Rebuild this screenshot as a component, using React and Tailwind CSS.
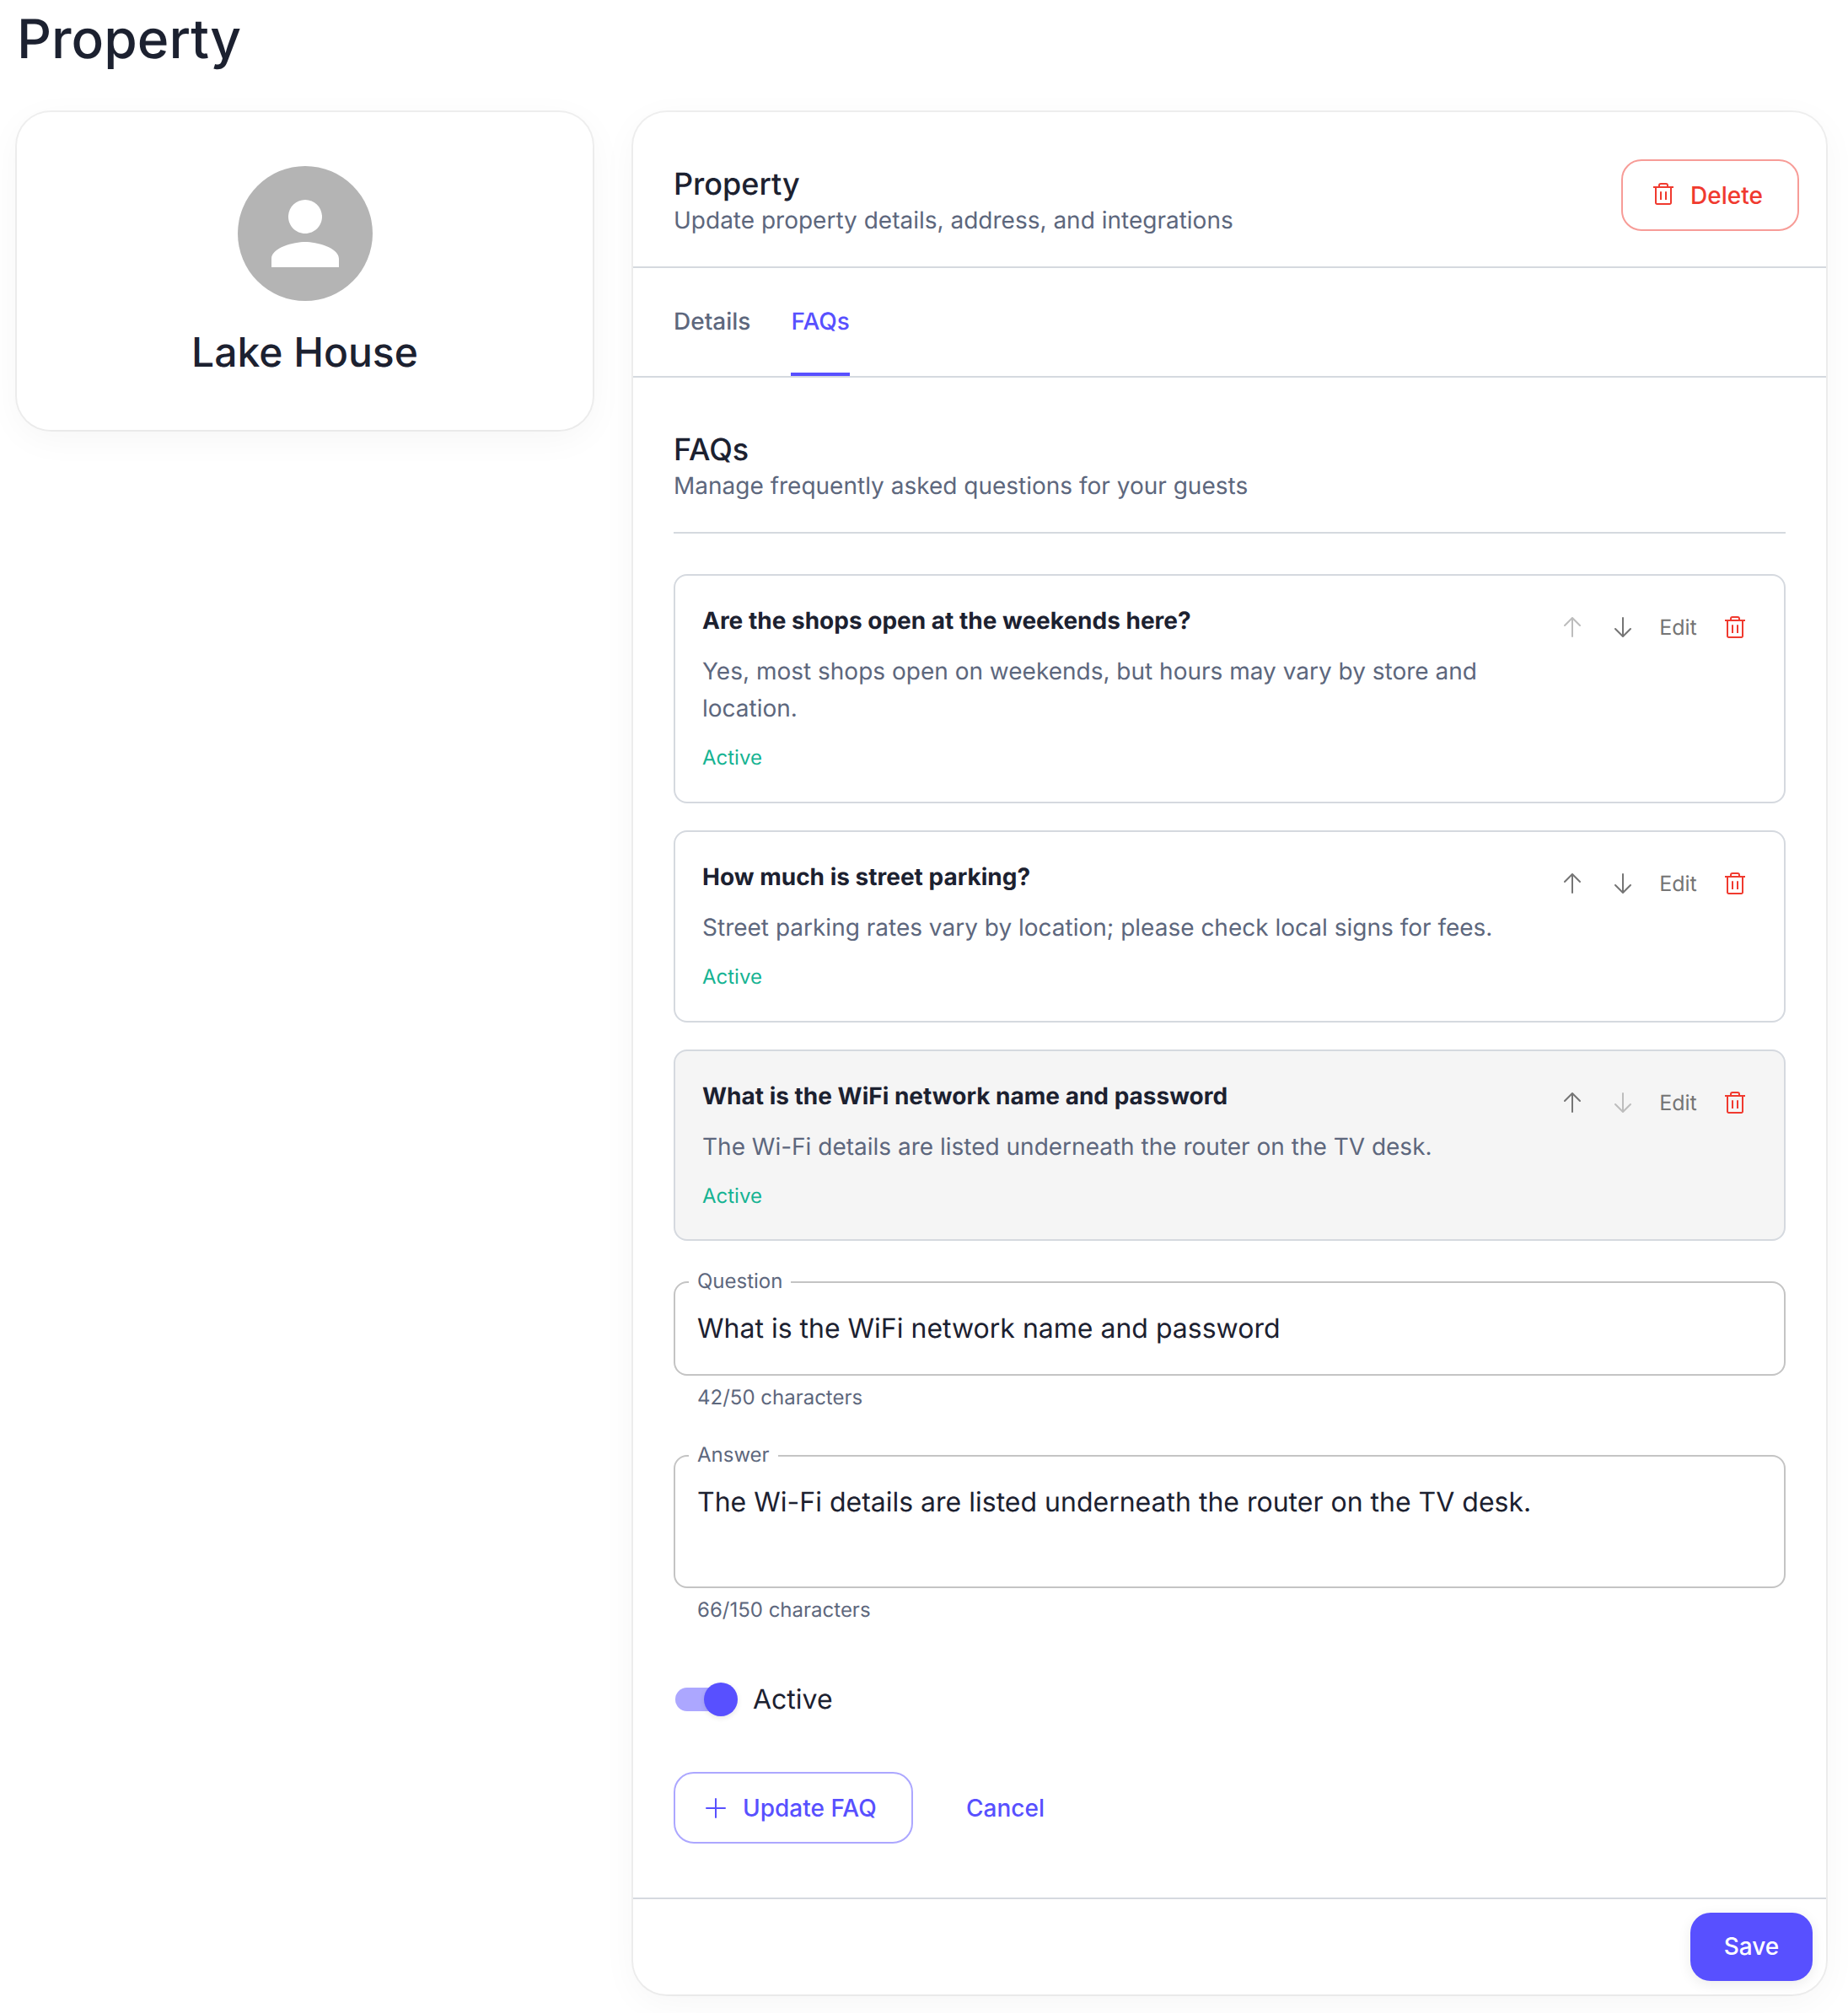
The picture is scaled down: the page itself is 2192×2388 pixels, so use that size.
const faqs = [
    {
        id: 1,
        question: "Are the shops open at the weekends here?",
        answer: "Yes, most shops open on weekends, but hours may vary by store and location.",
    },
    {
        id: 2,
        question: "How much is street parking?",
        answer: "Street parking rates vary by location; please check local signs for fees.",
    },
    {
        id: 3,
        question: "What is the WiFi network name and password",
        answer: "The Wi-Fi details are listed underneath the router on the TV desk.",
    },
];

function TrashIcon({ className }) {
    return (
        <svg className={className} viewBox="0 0 24 26" fill="none" stroke="currentColor" strokeWidth="2">
            <path d="M0 5h24M7 5V3a2 2 0 0 1 2-2h6a2 2 0 0 1 2 2v2M3 5v18.500a1.500 1.500 0 0 0 1.500 1.500h15a1.500 1.500 0 0 0 1.500-1.500V5M9 10.300v9.700M15 10.300v9.700" />
        </svg>
    );
}

function ArrowIcon({ className }) {
    return (
        <svg className={className} viewBox="0 0 20 24" fill="none" stroke="currentColor" strokeWidth="2" strokeLinecap="round" strokeLinejoin="round">
            <path d="M10 23V1.200M1 10l9-9 9 9" />
        </svg>
    );
}

function FaqItem({ faq, isFirst, isLast, selected }) {
    return (
        <div className={`flex justify-between items-start rounded-2xl border-2 border-[#d5d9df] pl-8 pr-[46px] pt-[31px] ${selected ? "bg-[#f5f5f5] pb-[29px]" : "pb-[30px]"}`}>
            <div className="w-[960px]">
                <h3 className="text-[28px] leading-[44px] font-bold text-[#1c2130]">{faq.question}</h3>
                <p className="mt-4 text-[28px] leading-[44px] text-[#5d677d]">{faq.answer}</p>
                <p className="mt-[15px] text-2xl leading-[44px] text-[#15b392]">Active</p>
            </div>
            <div className="flex items-center h-10 mt-[10px]">
                <ArrowIcon className={`w-5 h-6 ${isFirst ? "text-[#bdbdbd]" : "text-[#757575]"}`} />
                <ArrowIcon className={`w-5 h-6 ml-10 rotate-180 ${isLast ? "text-[#bdbdbd]" : "text-[#757575]"}`} />
                <span className="w-[111px] pt-[3px] text-center text-[25px] text-[#757575]">Edit</span>
                <TrashIcon className="w-6 h-[26px] text-[#f03a2f]" />
            </div>
        </div>
    );
}

function Field({ label, value, helper, className }) {
    return (
        <div>
            <fieldset className={`rounded-2xl border-2 border-[#c4c4c4] pl-4 pt-5 ${className}`}>
                <legend className="px-[10px] pb-[2px] text-2xl leading-[22px] text-[#5d677d]">{label}</legend>
                <p className="pl-[10px] text-[32px] leading-[46px] text-[#1c2130]">{value}</p>
            </fieldset>
            <p className="pl-7 mt-[6px] text-2xl leading-10 text-[#5d677d]">{helper}</p>
        </div>
    );
}

export default function App() {
    return (
        <div className="w-[2192px] h-[2388px] overflow-hidden bg-white pl-5 font-['Inter',sans-serif] text-[#1c2130] [text-rendering:geometricPrecision]">
            <h1 className="h-[133px] pt-2 text-[64px] leading-[77px] font-medium">Property</h1>

            <div className="flex items-start gap-12">
                <div className="w-[683px] h-[377px] pt-16 flex flex-col items-center rounded-[40px] shadow-[0_10px_44px_rgba(0,0,0,0.04),0_0_0_2px_rgba(0,0,0,0.06)]">
                    <div className="w-40 h-40 rounded-full bg-[#b4b4b4] flex items-center justify-center">
                        <svg className="w-[120px] h-[120px] text-white" viewBox="0 0 24 24" fill="currentColor">
                            <path d="M12 12c2.210 0 4-1.790 4-4s-1.790-4-4-4-4 1.790-4 4 1.790 4 4 4m0 2c-2.670 0-8 1.340-8 4v2h16v-2c0-2.660-5.330-4-8-4" />
                        </svg>
                    </div>
                    <h2 className="mt-8 text-[48px] leading-[58px] font-medium">Lake House</h2>
                </div>

                <div className="w-[1415px] h-[2233px] flex flex-col rounded-[40px] shadow-[0_10px_44px_rgba(0,0,0,0.04),0_0_0_2px_rgba(0,0,0,0.06)]">
                    <div className="h-[185px] flex justify-between items-start border-b-2 border-[#d5d9df] pl-12 pr-8 pt-14">
                        <div className="pt-2">
                            <h2 className="text-[36px] leading-[43px] font-medium">Property</h2>
                            <p className="-mt-px text-[28px] leading-[44px] text-[#5d677d]">Update property details, address, and integrations</p>
                        </div>
                        <button className="w-[211px] h-[85px] flex items-center pl-9 rounded-[24px] border-2 border-[#f79c97] text-[28px] font-medium text-[#f03a2f]">
                            <TrashIcon className="w-6 h-[26px] mr-5 -mt-[3px]" />
                            Delete
                        </button>
                    </div>

                    <div className="h-[130px] flex gap-12 border-b-2 border-[#d5d9df] pl-12 text-[28px] leading-[126px] font-medium">
                        <span className="text-[#5d677d]">Details</span>
                        <span className="border-b-4 border-[#5850ff] text-[#5850ff]">FAQs</span>
                    </div>

                    <div className="px-12 pt-16 flex-1">
                        <div className="h-[121px] border-b-2 border-[#d5d9df]">
                            <h2 className="text-[36px] leading-[43px] font-medium">FAQs</h2>
                            <p className="-mt-px text-[28px] leading-[44px] text-[#5d677d]">Manage frequently asked questions for your guests</p>
                        </div>

                        <div className="mt-12 flex flex-col gap-8">
                            {faqs.map((faq, i) => (
                                <FaqItem key={faq.id} faq={faq} isFirst={i === 0} isLast={i === faqs.length - 1} selected={faq.id === 3} />
                            ))}
                        </div>

                        <div className="mt-[37px]">
                            <Field label="Question" value="What is the WiFi network name and password" helper="42/50 characters" className="h-[123px]" />
                        </div>
                        <div className="mt-[37px]">
                            <Field label="Answer" value="The Wi-Fi details are listed underneath the router on the TV desk." helper="66/150 characters" className="h-[169px]" />
                        </div>

                        <div className="flex items-center mt-[62px] h-12">
                            <div className="w-[68px] h-7 ml-[2px] rounded-full bg-[#aca7ff] flex items-center pl-[34px]">
                                <div className="w-10 h-10 shrink-0 rounded-full bg-[#5850ff] shadow-[0_2px_6px_rgba(0,0,0,0.1)]"></div>
                            </div>
                            <span className="ml-6 text-[32px]">Active</span>
                        </div>

                        <div className="flex mt-[62px] text-[28px] font-medium text-[#5850ff]">
                            <button className="w-[284px] h-[85px] flex items-center pl-9 rounded-[24px] border-2 border-[#aca7ff]">
                                <svg className="w-6 h-6 mr-5" viewBox="0 0 24 24" fill="none" stroke="currentColor" strokeWidth="2" strokeLinecap="round">
                                    <path d="M12 1v22M1 12h22" />
                                </svg>
                                Update FAQ
                            </button>
                            <button className="ml-[63px]">Cancel</button>
                        </div>
                    </div>

                    <div className="h-[115px] flex justify-end border-t-2 border-[#d5d9df] pt-4 pr-4">
                        <button className="w-[145px] h-[81px] pb-[2px] rounded-[24px] bg-[#5850ff] text-[28px] font-medium text-white shadow-[0_4px_16px_rgba(0,0,0,0.08)]">Save</button>
                    </div>
                </div>
            </div>
        </div>
    );
}
